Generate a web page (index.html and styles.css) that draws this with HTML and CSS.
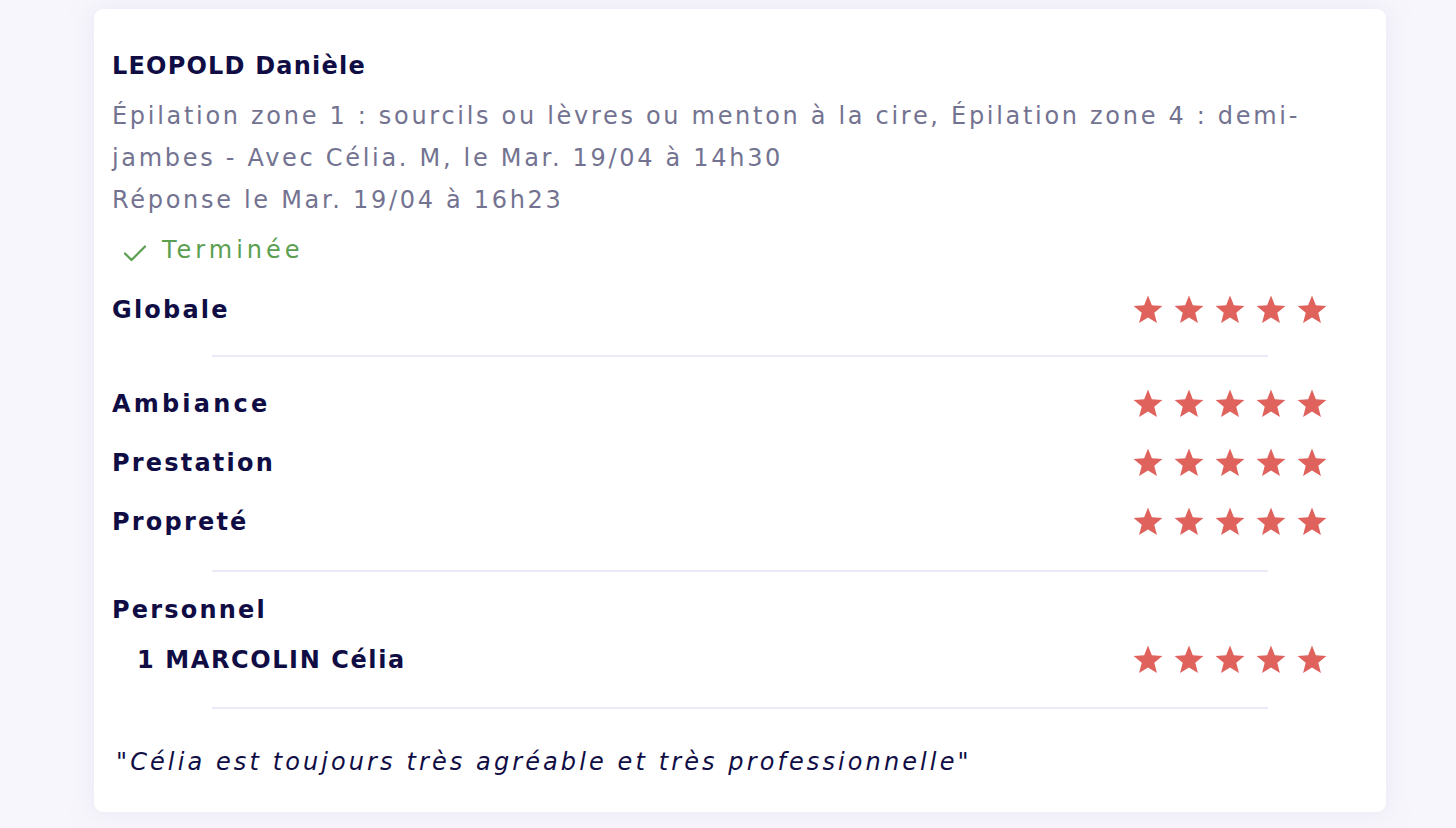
FILE: index.html
```html
<!DOCTYPE html>
<html>
  <head>
  <meta charset="utf-8">
  <title>Avis client</title>
  <link rel="stylesheet" href="styles.css">
  </head>
  <body>

<svg class="defs" width="0" height="0">
  <symbol id="star" viewBox="0 0 24 24">
    <polygon points="12,1.2 14.9,8.5 22.8,9 16.7,14.1 18.7,21.8 12,17.6 5.3,21.8 7.3,14.1 1.2,9 9.1,8.5" fill="#df625d"/>
  </symbol>
</svg>

<div class="card">
  <div class="client">LEOPOLD Danièle</div>
  <div class="details">
    Épilation zone 1 : sourcils ou lèvres ou menton à la cire, Épilation zone 4 : demi-jambes - Avec Célia. M, le Mar. 19/04 à 14h30<br>
    Réponse le Mar. 19/04 à 16h23
  </div>
  <div class="status">
    <svg width="26" height="20" viewBox="0 0 26 20"><path d="M3 10.5 L9.5 17 L23 3.5" fill="none" stroke="#5b9f50" stroke-width="2.2" stroke-linecap="round" stroke-linejoin="round"/></svg>
    Terminée
  </div>

  <div class="row first">
    <span class="label">Globale</span>
    <span class="stars"><svg><use href="#star"/></svg><svg><use href="#star"/></svg><svg><use href="#star"/></svg><svg><use href="#star"/></svg><svg><use href="#star"/></svg></span>
  </div>

  <hr>

  <div class="row">
    <span class="label wide">Ambiance</span>
    <span class="stars"><svg><use href="#star"/></svg><svg><use href="#star"/></svg><svg><use href="#star"/></svg><svg><use href="#star"/></svg><svg><use href="#star"/></svg></span>
  </div>
  <div class="row gap">
    <span class="label">Prestation</span>
    <span class="stars"><svg><use href="#star"/></svg><svg><use href="#star"/></svg><svg><use href="#star"/></svg><svg><use href="#star"/></svg><svg><use href="#star"/></svg></span>
  </div>
  <div class="row gap">
    <span class="label">Propreté</span>
    <span class="stars"><svg><use href="#star"/></svg><svg><use href="#star"/></svg><svg><use href="#star"/></svg><svg><use href="#star"/></svg><svg><use href="#star"/></svg></span>
  </div>

  <hr class="after-rows">

  <div class="row staff-title">
    <span class="label">Personnel</span>
  </div>
  <div class="row staff">
    <span class="label">1 MARCOLIN Célia</span>
    <span class="stars"><svg><use href="#star"/></svg><svg><use href="#star"/></svg><svg><use href="#star"/></svg><svg><use href="#star"/></svg><svg><use href="#star"/></svg></span>
  </div>

  <hr class="before-comment">

  <div class="comment">"Célia est toujours très agréable et très professionnelle"</div>
</div>

  </body>
</html>
```

FILE: styles.css
```css
body {background-color:#f7f6fc; margin:0; padding:9px 70px 16px 94px; font-family:"DejaVu Sans", sans-serif; color:#100d45;}
.defs {position:absolute;}
.card {background-color:#fff; border-radius:9px; padding:39px 18px 30px 18px; box-shadow:0 0 22px rgba(220,218,240,0.55);}
.client {font-size:24px; line-height:36px; font-weight:700; letter-spacing:1.2px;}
.details {margin-top:11px; font-size:24px; line-height:42px; color:#737391; letter-spacing:2.7px; padding-right:40px;}
.status {margin-top:9px; height:40px; display:flex; align-items:center; gap:14px; padding-left:10px; font-size:24px; color:#5b9f50; letter-spacing:4px;}
.status svg {margin-top:6px;}
.row {display:flex; align-items:center; justify-content:space-between; height:40px; padding-right:40px;}
.row.first {margin-top:20px;}
.row.gap {margin-top:19px;}
.label {font-size:24px; font-weight:700; letter-spacing:2.2px;}
.label.wide {letter-spacing:3.2px;}
.stars {display:flex; gap:9px;}
.stars svg {width:32px; height:32px;}
hr {width:84%; height:2px; border:0; background-color:#ebe9f6; margin:25px auto 27px auto;}
hr.after-rows {margin:28px auto 18px auto;}
hr.before-comment {margin:27px auto 18px auto;}
.staff {margin-top:10px; padding-left:25px;}
.staff .label {letter-spacing:1.6px;}
.comment {margin-top:33px; line-height:40px; font-size:24px; font-style:italic; letter-spacing:3.1px; padding-left:4px;}
```
